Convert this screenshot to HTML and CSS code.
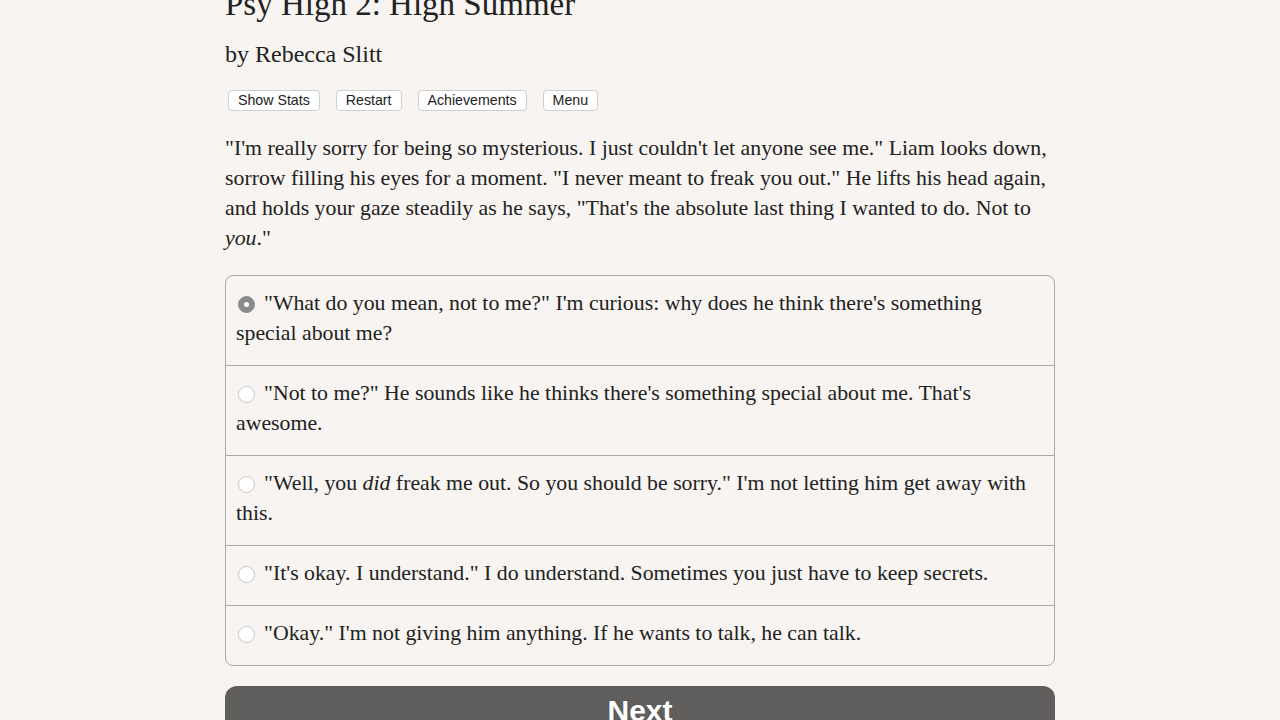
FILE: index.html
```html
<!DOCTYPE html>
<html>
<head>
<meta charset="utf-8">
<link rel="stylesheet" href="styles.css">
</head>
<body>
<div class="page">
  <h1 class="title">Psy High 2: High Summer</h1>
  <h2 class="author">by Rebecca Slitt</h2>
  <div class="buttons">
    <button class="btn">Show Stats</button>
    <button class="btn">Restart</button>
    <button class="btn">Achievements</button>
    <button class="btn">Menu</button>
  </div>
  <p class="story">"I'm really sorry for being so mysterious. I just couldn't let anyone see me." Liam looks down, sorrow filling his eyes for a moment. "I never meant to freak you out." He lifts his head again, and holds your gaze steadily as he says, "That's the absolute last thing I wanted to do. Not to <i>you</i>."</p>
  <div class="choices">
    <div class="choice"><span class="radio checked"></span>"What do you mean, not to me?" I'm curious: why does he think there's something special about me?</div>
    <div class="choice"><span class="radio"></span>"Not to me?" He sounds like he thinks there's something special about me. That's awesome.</div>
    <div class="choice"><span class="radio"></span>"Well, you <i>did</i> freak me out. So you should be sorry." I'm not letting him get away with this.</div>
    <div class="choice"><span class="radio"></span>"It's okay. I understand." I do understand. Sometimes you just have to keep secrets.</div>
    <div class="choice"><span class="radio"></span>"Okay." I'm not giving him anything. If he wants to talk, he can talk.</div>
  </div>
  <button class="next">Next</button>
</div>
</body>
</html>
```

FILE: styles.css
```css
html, body {
  margin: 0;
  padding: 0;
  background: #f7f4f1;
  height: 720px;
  overflow: hidden;
}
.page {
  width: 830px;
  margin: -18px auto 0;
  font-family: "Liberation Serif", "Times New Roman", serif;
  color: #222;
}
.title {
  font-size: 33px;
  font-weight: normal;
  line-height: 44px;
  margin: 0;
}
.author {
  font-size: 24px;
  font-weight: normal;
  line-height: 32px;
  margin: 12px 0 0;
}
.buttons {
  display: flex;
  gap: 16px;
  margin: 20px 0 0 3px;
}
.btn {
  font-family: "Liberation Sans", Arial, sans-serif;
  font-size: 14.2px;
  line-height: 19px;
  padding: 0 9px;
  background: #fff;
  border: 1px solid #cfcfcf;
  border-radius: 4px;
  color: #222;
}
.story {
  font-size: 21.8px;
  line-height: 30px;
  margin: 22px 0 22px;
}
.choices {
  border: 1px solid #a9a9a9;
  border-radius: 8px;
  overflow: hidden;
}
.choice {
  font-size: 21.8px;
  line-height: 30px;
  padding: 12px 10px 17px;
  border-top: 1px solid #a9a9a9;
}
.choice:first-child {
  border-top: none;
  padding-top: 12px;
}
.radio {
  display: inline-block;
  width: 15px;
  height: 15px;
  border: 1px solid #c8c8c8;
  background: #fff;
  border-radius: 50%;
  margin: 0 9px 0 2px;
  vertical-align: -3px;
  position: relative;
}
.radio.checked {
  background: #8a8a8a;
  border-color: #8a8a8a;
}
.radio.checked::after {
  content: "";
  position: absolute;
  left: 5px;
  top: 5px;
  width: 5px;
  height: 5px;
  border-radius: 50%;
  background: #fff;
}
.next {
  display: block;
  width: 100%;
  margin-top: 20px;
  height: 50px;
  border: none;
  border-radius: 12px;
  background: #5f5e5c;
  color: #fff;
  font-family: "Liberation Sans", Arial, sans-serif;
  font-weight: bold;
  font-size: 30px;
  padding: 0;
}
```
